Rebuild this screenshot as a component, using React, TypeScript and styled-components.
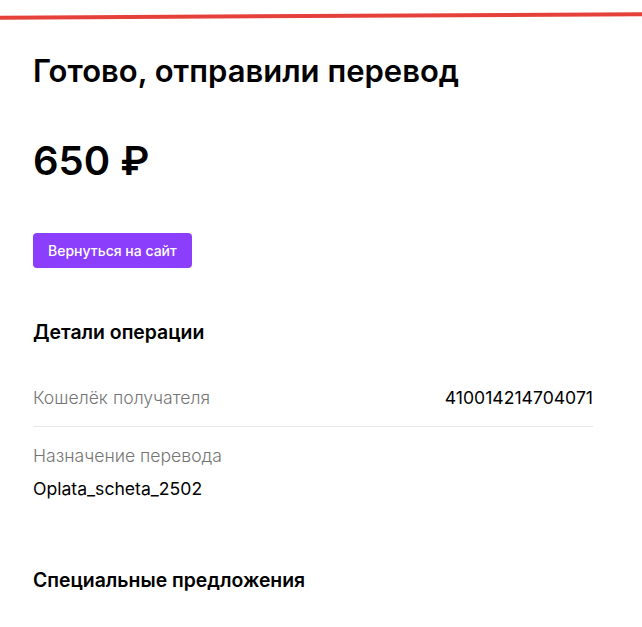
import React from "react";
import styled, { createGlobalStyle } from "styled-components";

const GlobalStyle = createGlobalStyle`
  html, body { margin: 0; padding: 0; background: #fff; }
  body { font-family: Inter, "Noto Sans", sans-serif; color: #000; }
`;

const Page = styled.div`
  width: 642px;
  min-height: 627px;
  position: relative;
  overflow: hidden;
`;

const TopLine = styled.div`
  height: 4px;
  background: #e5403a;
  width: 660px;
  margin-left: -6px;
  margin-top: 14px;
  transform: rotate(-0.3deg);
`;

const Content = styled.div`
  padding: 33px 49px 0 33px;
  display: flex;
  flex-direction: column;
`;

const Title = styled.h1`
  margin: 0;
  font-size: 31px;
  line-height: 40px;
  font-weight: 600;
  letter-spacing: 0;
`;

const Amount = styled.div`
  margin-top: 46px;
  font-size: 40px;
  line-height: 48px;
  font-weight: 600;
`;

const ReturnButton = styled.button`
  margin-top: 48px;
  align-self: flex-start;
  height: 35px;
  padding: 0 15px;
  border: none;
  border-radius: 4px;
  background: #8b3ffd;
  color: #fff;
  font-family: Inter, sans-serif;
  font-size: 14px;
  font-weight: 500;
  cursor: pointer;
`;

const SectionTitle = styled.h2<{ $gap: number }>`
  margin: ${(p) => p.$gap}px 0 0;
  font-size: 19.4px;
  line-height: 24px;
  font-weight: 600;
`;

const Row = styled.div`
  display: flex;
  justify-content: space-between;
  align-items: center;
  padding: 20px 0 17px;
  border-bottom: 1px solid #e8e8e8;
  margin-top: 23px;
`;

const Label = styled.div`
  font-size: 17.6px;
  line-height: 22px;
  font-weight: 300;
  color: #757575;
`;

const Value = styled.div`
  font-size: 17.6px;
  line-height: 22px;
  font-weight: 400;
  color: #000;
`;

const Block = styled.div`
  padding-top: 18px;
  display: flex;
  flex-direction: column;
  gap: 11px;
`;

export default function App() {
  return (
    <Page>
      <GlobalStyle />
      <TopLine />
      <Content>
        <Title>Готово, отправили перевод</Title>
        <Amount>650 ₽</Amount>
        <ReturnButton>Вернуться на сайт</ReturnButton>
        <SectionTitle $gap={52}>Детали операции</SectionTitle>
        <Row>
          <Label>Кошелёк получателя</Label>
          <Value>410014214704071</Value>
        </Row>
        <Block>
          <Label>Назначение перевода</Label>
          <Value>Oplata_scheta_2502</Value>
        </Block>
        <SectionTitle $gap={68}>Специальные предложения</SectionTitle>
      </Content>
    </Page>
  );
}
